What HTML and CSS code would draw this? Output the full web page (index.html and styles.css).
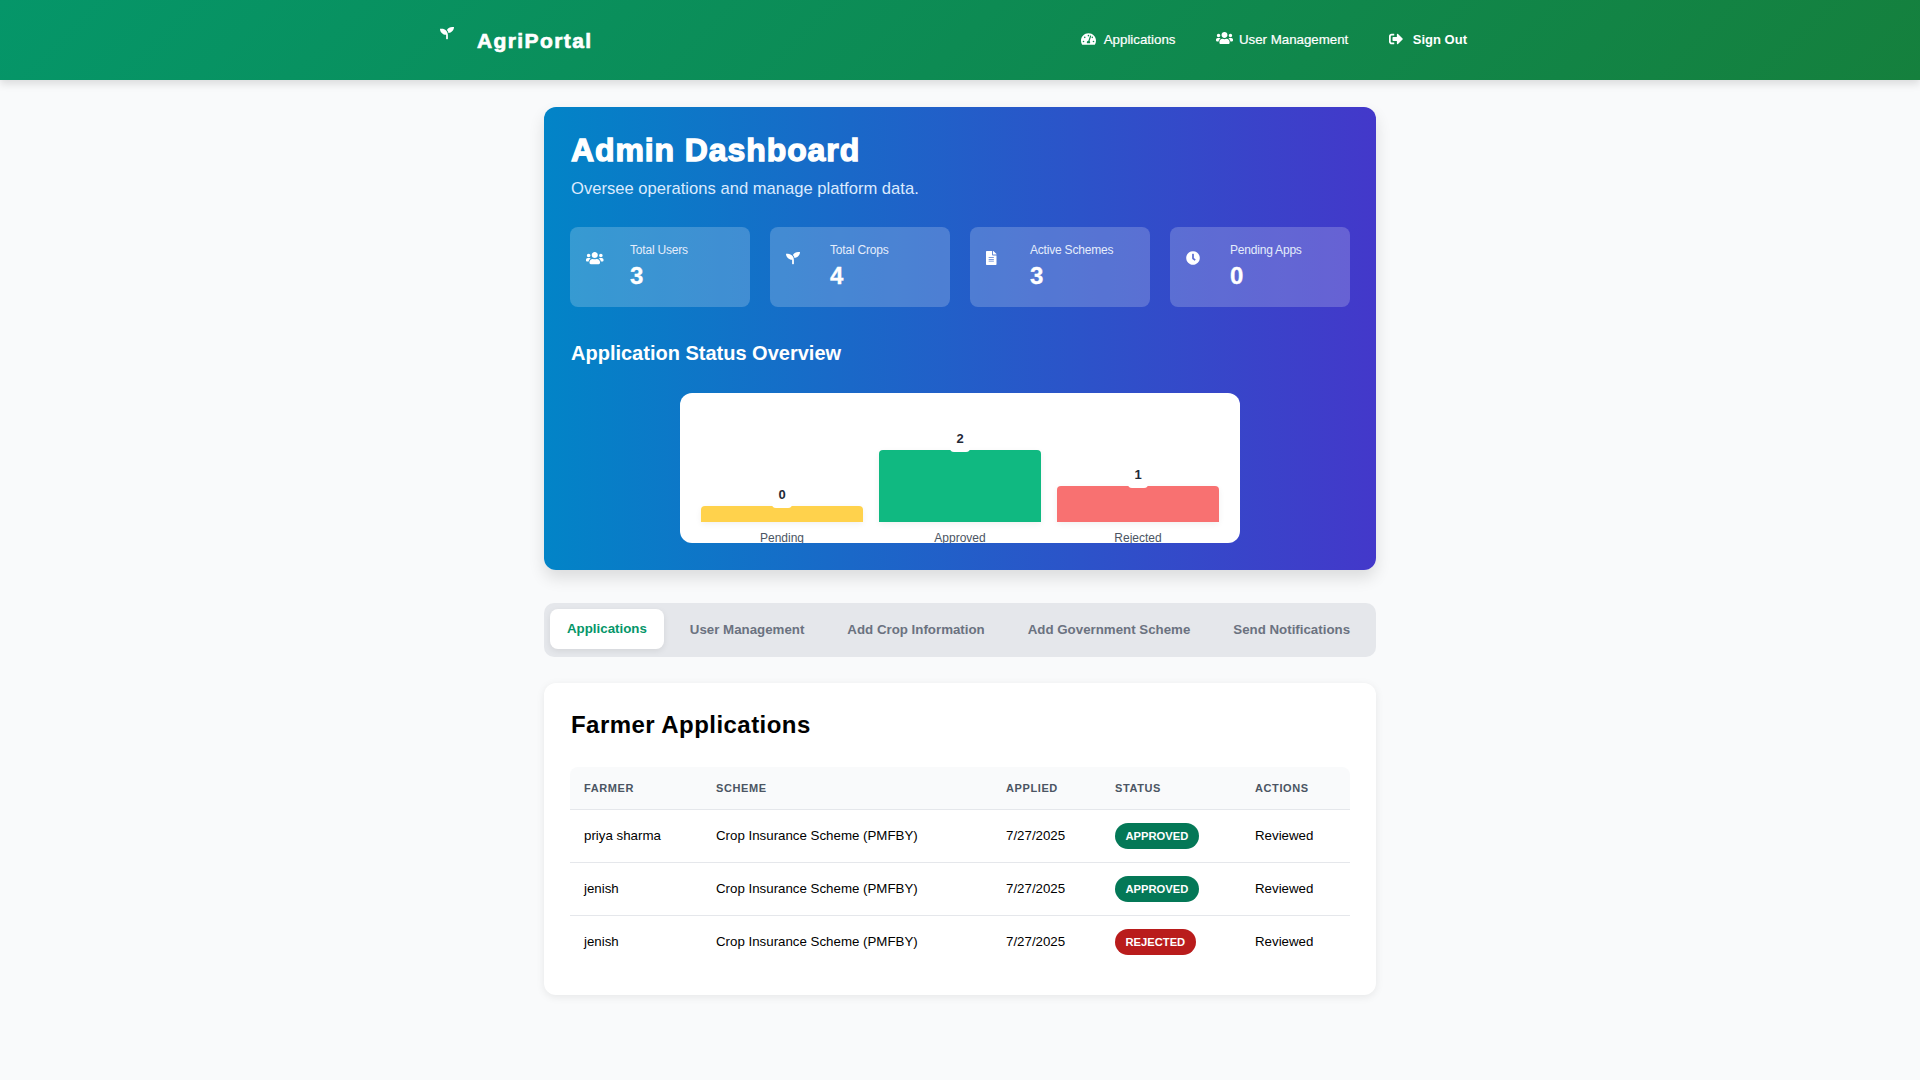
FILE: index.html
```html
<!DOCTYPE html>
<html lang="en">
<head>
  <meta charset="UTF-8">
  <title>AgriPortal - Admin Dashboard</title>
  <link rel="stylesheet" href="styles.css">
</head>
<body>

  <svg class="icon-defs" xmlns="http://www.w3.org/2000/svg">
    <symbol id="i-seedling" viewBox="0 0 512 512" preserveAspectRatio="xMinYMid"><path d="M64 96H0c0 123.7 100.3 224 224 224v144c0 8.8 7.2 16 16 16h32c8.8 0 16-7.2 16-16V320C288 196.3 187.7 96 64 96zm384-64c-84.2 0-157.4 46.5-195.7 115.2 27.7 30.2 48.2 66.9 59 107.6C424 243.1 512 147.9 512 32h-64z"/></symbol>
    <symbol id="i-gauge" viewBox="0 0 576 512" preserveAspectRatio="xMinYMid"><path d="M288 32C128.94 32 0 160.94 0 320c0 52.8 14.25 102.26 39.06 144.8 5.61 9.62 16.3 15.2 27.44 15.2h443c11.14 0 21.83-5.58 27.44-15.2C561.75 422.26 576 372.8 576 320c0-159.06-128.94-288-288-288zm0 64c14.71 0 26.58 10.13 30.32 23.65-1.11 2.26-2.64 4.23-3.45 6.67l-9.22 27.67c-5.13 3.49-10.97 6.01-17.64 6.01-17.67 0-32-14.33-32-32S270.33 96 288 96zM96 384c-17.67 0-32-14.33-32-32s14.33-32 32-32 32 14.33 32 32-14.33 32-32 32zm48-160c-17.67 0-32-14.33-32-32s14.33-32 32-32 32 14.33 32 32-14.33 32-32 32zm246.77-72.41l-61.33 184C343.13 347.33 352 364.54 352 384c0 11.72-3.38 22.55-8.88 32H232.88c-5.5-9.45-8.88-20.28-8.88-32 0-33.94 26.5-61.43 59.9-63.59l61.34-184.01c4.17-12.56 17.73-19.45 30.36-15.17 12.57 4.19 19.35 17.77 15.17 30.36zm14.66 57.2l15.52-46.55c3.47-1.29 7.13-2.23 11.05-2.23 17.67 0 32 14.33 32 32s-14.33 32-32 32c-11.38-.01-20.89-6.28-26.57-15.22zM480 384c-17.67 0-32-14.33-32-32s14.33-32 32-32 32 14.33 32 32-14.33 32-32 32z"/></symbol>
    <symbol id="i-users" viewBox="0 0 640 512" preserveAspectRatio="xMinYMid"><path d="M96 224c35.3 0 64-28.7 64-64s-28.7-64-64-64-64 28.7-64 64 28.7 64 64 64zm448 0c35.3 0 64-28.7 64-64s-28.7-64-64-64-64 28.7-64 64 28.7 64 64 64zm32 32h-64c-17.6 0-33.5 7.1-45.1 18.6 40.3 22.1 68.9 62 75.1 109.4h66c17.7 0 32-14.3 32-32v-32c0-35.3-28.7-64-64-64zm-256 0c61.9 0 112-50.1 112-112S381.9 32 320 32 208 82.1 208 144s50.1 112 112 112zm76.8 32h-8.3c-20.8 10-43.9 16-68.5 16s-47.6-6-68.5-16h-8.3C179.6 288 128 339.6 128 403.2V432c0 26.5 21.5 48 48 48h288c26.5 0 48-21.5 48-48v-28.8c0-63.6-51.6-115.2-115.2-115.2zm-223.7-13.4C161.5 263.1 145.6 256 128 256H64c-35.3 0-64 28.7-64 64v32c0 17.7 14.3 32 32 32h65.9c6.3-47.4 34.9-87.3 75.2-109.4z"/></symbol>
    <symbol id="i-signout" viewBox="0 0 512 512" preserveAspectRatio="xMinYMid"><path d="M497 273L329 441c-15 15-41 4.5-41-17v-96H152c-13.3 0-24-10.7-24-24v-96c0-13.3 10.7-24 24-24h136V88c0-21.4 25.9-32 41-17l168 168c9.3 9.4 9.3 24.6 0 34zM192 436v-40c0-6.6-5.4-12-12-12H96c-17.7 0-32-14.3-32-32V160c0-17.7 14.3-32 32-32h84c6.6 0 12-5.4 12-12V76c0-6.6-5.4-12-12-12H96c-53 0-96 43-96 96v192c0 53 43 96 96 96h84c6.6 0 12-5.4 12-12z"/></symbol>
    <symbol id="i-file" viewBox="0 0 384 512" preserveAspectRatio="xMinYMid"><path d="M224 136V0H24C10.7 0 0 10.7 0 24v464c0 13.3 10.7 24 24 24h336c13.3 0 24-10.7 24-24V160H248c-13.2 0-24-10.8-24-24zm64 236c0 6.6-5.4 12-12 12H108c-6.6 0-12-5.4-12-12v-8c0-6.6 5.4-12 12-12h168c6.6 0 12 5.4 12 12v8zm0-64c0 6.6-5.4 12-12 12H108c-6.6 0-12-5.4-12-12v-8c0-6.6 5.4-12 12-12h168c6.6 0 12 5.4 12 12v8zm0-72v8c0 6.6-5.4 12-12 12H108c-6.6 0-12-5.4-12-12v-8c0-6.6 5.4-12 12-12h168c6.6 0 12 5.4 12 12zm96-114.1v6.1H256V0h6.1c6.4 0 12.5 2.5 17 7l97.9 98c4.5 4.5 7 10.6 7 16.9z"/></symbol>
    <symbol id="i-clock" viewBox="0 0 512 512" preserveAspectRatio="xMinYMid"><path d="M256,8C119,8,8,119,8,256S119,504,256,504,504,393,504,256,393,8,256,8Zm92.49,313h0l-20,25a16,16,0,0,1-22.49,2.5h0l-67-49.72a40,40,0,0,1-15-31.23V112a16,16,0,0,1,16-16h32a16,16,0,0,1,16,16V256l58,42.5A16,16,0,0,1,348.49,321Z"/></symbol>
  </svg>

  <header class="topbar">
    <div class="topbar-inner">
      <div class="brand">
        <svg class="brand-icon"><use href="#i-seedling"/></svg>
        <span class="brand-name">AgriPortal</span>
      </div>
      <nav class="nav">
        <a class="nav-link" href="#"><svg class="nav-icon"><use href="#i-gauge"/></svg>Applications</a>
        <a class="nav-link" href="#"><svg class="nav-icon nav-icon-wide"><use href="#i-users"/></svg>User Management</a>
        <a class="nav-link nav-link-strong" href="#"><svg class="nav-icon"><use href="#i-signout"/></svg>Sign Out</a>
      </nav>
    </div>
  </header>

  <main class="container">
    <section class="hero">
      <h1 class="hero-title">Admin Dashboard</h1>
      <p class="hero-sub">Oversee operations and manage platform data.</p>

      <div class="stats">
        <div class="stat">
          <svg class="stat-icon"><use href="#i-users"/></svg>
          <div>
            <div class="stat-label">Total Users</div>
            <div class="stat-value">3</div>
          </div>
        </div>
        <div class="stat">
          <svg class="stat-icon"><use href="#i-seedling"/></svg>
          <div>
            <div class="stat-label">Total Crops</div>
            <div class="stat-value">4</div>
          </div>
        </div>
        <div class="stat">
          <svg class="stat-icon"><use href="#i-file"/></svg>
          <div>
            <div class="stat-label">Active Schemes</div>
            <div class="stat-value">3</div>
          </div>
        </div>
        <div class="stat">
          <svg class="stat-icon"><use href="#i-clock"/></svg>
          <div>
            <div class="stat-label">Pending Apps</div>
            <div class="stat-value">0</div>
          </div>
        </div>
      </div>

      <h2 class="hero-heading">Application Status Overview</h2>

      <div class="chart">
        <div class="chart-col">
          <div class="chart-bar bar-pending" style="height: 16px"><span class="chart-num">0</span></div>
          <div class="chart-label">Pending</div>
        </div>
        <div class="chart-col">
          <div class="chart-bar bar-approved" style="height: 72px"><span class="chart-num">2</span></div>
          <div class="chart-label">Approved</div>
        </div>
        <div class="chart-col">
          <div class="chart-bar bar-rejected" style="height: 36px"><span class="chart-num">1</span></div>
          <div class="chart-label">Rejected</div>
        </div>
      </div>
    </section>

    <div class="tabs">
      <button class="tab tab-active">Applications</button>
      <button class="tab">User Management</button>
      <button class="tab">Add Crop Information</button>
      <button class="tab">Add Government Scheme</button>
      <button class="tab">Send Notifications</button>
    </div>

    <section class="panel">
      <h2 class="panel-title">Farmer Applications</h2>
      <table class="apps">
        <colgroup>
          <col class="col-farmer">
          <col class="col-scheme">
          <col class="col-applied">
          <col class="col-status">
          <col class="col-actions">
        </colgroup>
        <thead>
          <tr>
            <th>Farmer</th>
            <th>Scheme</th>
            <th>Applied</th>
            <th>Status</th>
            <th>Actions</th>
          </tr>
        </thead>
        <tbody>
          <tr>
            <td>priya sharma</td>
            <td>Crop Insurance Scheme (PMFBY)</td>
            <td>7/27/2025</td>
            <td class="status-cell"><span class="pill pill-ok">Approved</span></td>
            <td>Reviewed</td>
          </tr>
          <tr>
            <td>jenish</td>
            <td>Crop Insurance Scheme (PMFBY)</td>
            <td>7/27/2025</td>
            <td class="status-cell"><span class="pill pill-ok">Approved</span></td>
            <td>Reviewed</td>
          </tr>
          <tr>
            <td>jenish</td>
            <td>Crop Insurance Scheme (PMFBY)</td>
            <td>7/27/2025</td>
            <td class="status-cell"><span class="pill pill-bad">Rejected</span></td>
            <td>Reviewed</td>
          </tr>
        </tbody>
      </table>
    </section>
  </main>

</body>
</html>
```

FILE: styles.css
```css
* { box-sizing: border-box; }
body {
  margin: 0;
  min-height: 1080px;
  background: #f9fafb;
  color: #000;
  font-family: "Liberation Sans", Arial, sans-serif;
}
.icon-defs {
  display: none;
}

/* top bar */
.topbar {
  height: 80px;
  background: linear-gradient(135deg, #059669, #15803d);
  box-shadow: 0 4px 8px rgba(0, 0, 0, 0.12);
  color: #fff;
}
.topbar-inner {
  width: 1040px;
  height: 80px;
  margin: 0 auto;
  display: flex;
  align-items: center;
  justify-content: space-between;
}
.brand {
  display: flex;
  align-items: flex-start;
}
.brand-icon {
  width: 14px;
  height: 14px;
  margin-top: -1px;
  fill: #fff;
}
.brand-name {
  margin-left: 23px;
  margin-top: 2px;
  font-size: 21px;
  font-weight: 700;
  letter-spacing: 1.4px;
  -webkit-text-stroke: 0.7px #fff;
}
.nav {
  display: flex;
  gap: 14.5px;
  margin-top: -2px;
}
.nav-link {
  display: flex;
  align-items: center;
  padding: 0 13px;
  color: #fff;
  font-size: 13.3px;
  font-weight: 500;
  text-decoration: none;
  -webkit-text-stroke: 0.2px #fff;
}
.nav-link-strong {
  font-size: 13px;
  font-weight: 700;
  -webkit-text-stroke: 0;
}
.nav-icon {
  width: 15px;
  height: 14px;
  margin-right: 8px;
  fill: #fff;
}
.nav-icon-wide {
  width: 17px;
  margin-right: 6px;
  margin-top: -2px;
}
.nav-link-strong .nav-icon {
  margin-right: 9px;
}

/* main column */
.container {
  width: 832px;
  margin: 27px auto 0;
}
.hero {
  height: 463px;
  padding: 26px;
  border-radius: 12px;
  background: linear-gradient(90deg, #0284c7, #4338ca);
  box-shadow: 0 8px 16px rgba(0, 0, 0, 0.12);
  color: #fff;
}
.hero-title {
  margin: -1px 0 0 1px;
  font-size: 32px;
  line-height: 36px;
  font-weight: 700;
  letter-spacing: 0.9px;
  -webkit-text-stroke: 1.3px #fff;
}
.hero-sub {
  margin: 9px 0 0 1px;
  font-size: 16.6px;
  line-height: 24px;
  color: #dbeafe;
}
.stats {
  display: grid;
  grid-template-columns: repeat(4, 180px);
  gap: 20px;
  margin-top: 26px;
}
.stat {
  display: flex;
  height: 80px;
  padding: 15px 16px 16px;
  border-radius: 8px;
  background: rgba(255, 255, 255, 0.2);
}
.stat-icon {
  flex: none;
  width: 18px;
  height: 14px;
  margin: 9px 26px 0 0;
  fill: #fff;
}
.stat-label {
  font-size: 12px;
  line-height: 16px;
  color: #e5edfb;
  letter-spacing: -0.2px;
}
.stat-value {
  margin-top: 2px;
  font-size: 24px;
  line-height: 32px;
  font-weight: 700;
  -webkit-text-stroke: 0.3px #fff;
}
.hero-heading {
  margin: 32px 0 0 1px;
  font-size: 20px;
  line-height: 28px;
  font-weight: 700;
}
.chart {
  display: flex;
  align-items: flex-end;
  gap: 16px;
  width: 560px;
  height: 150px;
  margin: 26px auto 0;
  padding: 0 21px;
  border-radius: 12px;
  background: #fff;
  overflow: hidden;
}
.chart-col {
  width: 162px;
  text-align: center;
}
.chart-bar {
  position: relative;
  border-radius: 4px 4px 0 0;
  box-shadow: 0 2px 6px rgba(0, 0, 0, 0.06);
}
.bar-pending { background: #ffd24c; }
.bar-approved { background: #10b981; }
.bar-rejected { background: #f87171; }
.chart-num {
  position: absolute;
  left: 50%;
  top: -22px;
  width: 20px;
  height: 24px;
  margin-left: -10px;
  padding-top: 2px;
  border-radius: 4px;
  background: #fff;
  color: #1f2937;
  font-size: 13px;
  line-height: 18px;
  font-weight: 700;
}
.chart-label {
  margin-top: 9px;
  height: 12px;
  font-size: 12px;
  line-height: 14px;
  color: #4b5563;
}

/* tabs */
.tabs {
  display: flex;
  gap: 9px;
  height: 54px;
  margin-top: 33px;
  padding: 6px;
  border-radius: 10px;
  background: #e5e7eb;
}
.tab {
  height: 40px;
  padding: 0 17px;
  border: none;
  border-radius: 8px;
  background: none;
  color: #6b7280;
  font-family: inherit;
  font-size: 13.3px;
  font-weight: 700;
  white-space: nowrap;
}
.tab-active {
  padding-bottom: 2px;
  background: #fff;
  color: #059669;
  box-shadow: 0 2px 6px rgba(0, 0, 0, 0.08);
}

/* applications table */
.panel {
  height: 312px;
  margin-top: 26px;
  padding: 26px;
  border-radius: 12px;
  background: #fff;
  box-shadow: 0 2px 8px rgba(0, 0, 0, 0.08);
}
.panel-title {
  margin: 0 0 0 1px;
  font-size: 24px;
  line-height: 32px;
  font-weight: 700;
  letter-spacing: 0.45px;
}
.apps {
  width: 780px;
  margin-top: 26px;
  border-collapse: separate;
  border-spacing: 0;
  table-layout: fixed;
}
.col-farmer { width: 132px; }
.col-scheme { width: 290px; }
.col-applied { width: 109px; }
.col-status { width: 140px; }
.col-actions { width: 109px; }
.apps th {
  height: 43px;
  padding: 0 14px;
  background: #f9fafb;
  border-bottom: 1px solid #e5e7eb;
  color: #4b5563;
  font-size: 11px;
  font-weight: 700;
  letter-spacing: 0.6px;
  text-align: left;
  text-transform: uppercase;
}
.apps th:first-child { border-top-left-radius: 8px; }
.apps th:last-child { border-top-right-radius: 8px; }
.apps td {
  height: 53px;
  padding: 0 14px 2px;
  border-bottom: 1px solid #e5e7eb;
  font-size: 13.3px;
}
.apps td.status-cell {
  padding-bottom: 0;
}
.apps tr:last-child td {
  border-bottom-color: transparent;
}
.pill {
  display: inline-block;
  height: 26px;
  padding: 0 10.5px;
  border-radius: 13px;
  color: #fff;
  font-size: 11.2px;
  line-height: 26px;
  font-weight: 700;
  text-transform: uppercase;
}
.pill-ok { background: #047857; }
.pill-bad { background: #b91c1c; }
```
